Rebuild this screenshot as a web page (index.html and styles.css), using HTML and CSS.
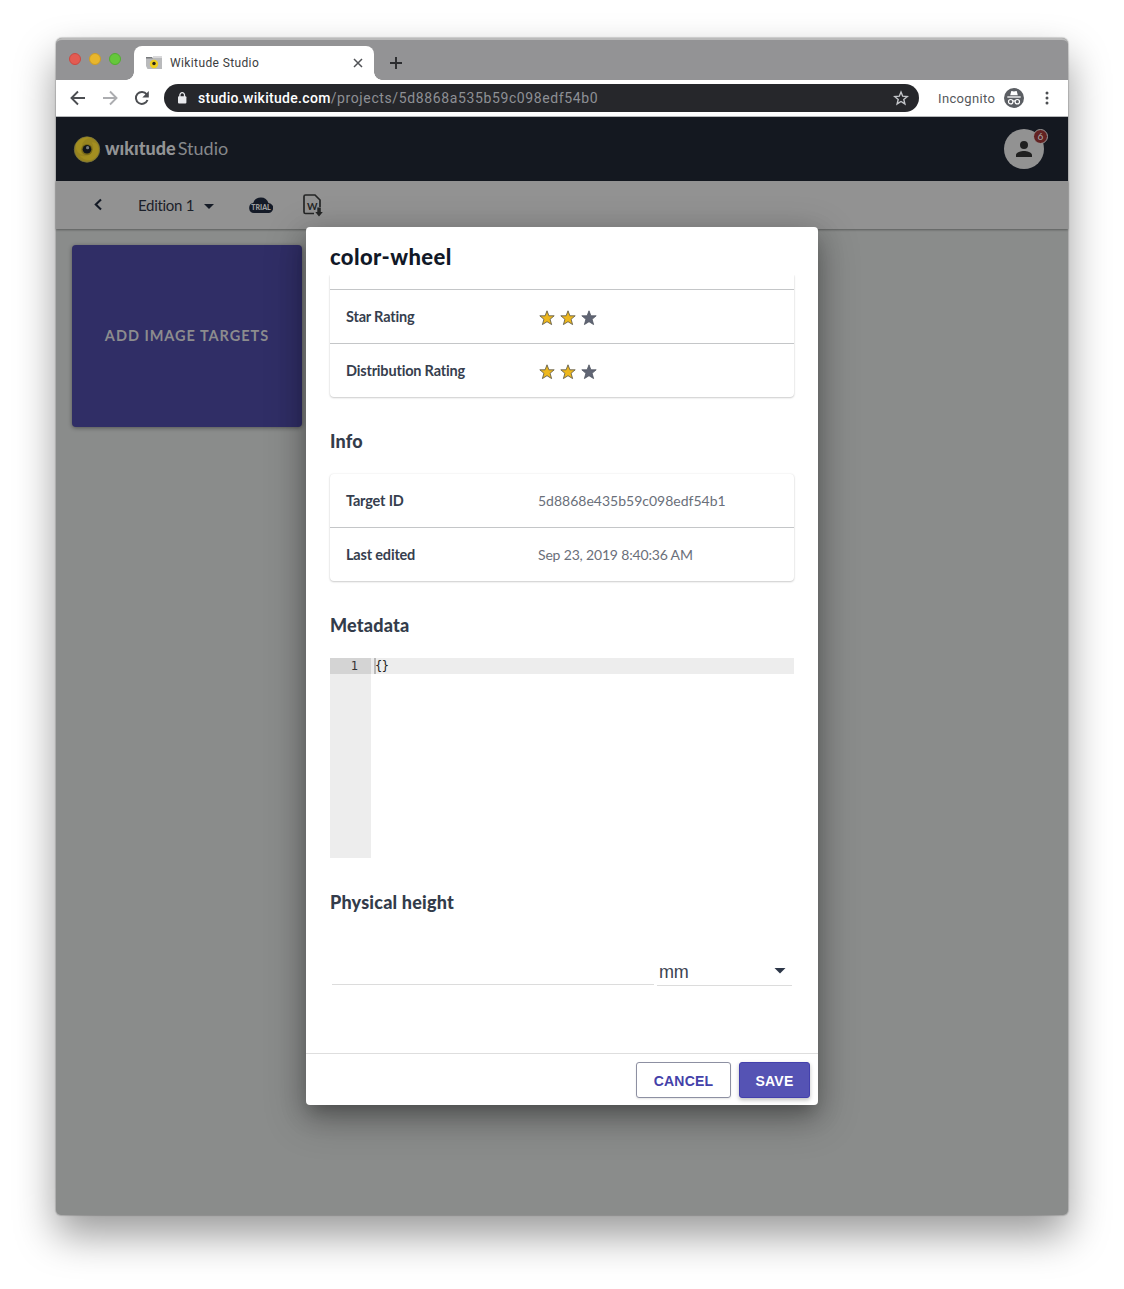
FILE: index.html
```html
<!DOCTYPE html>
<html lang="en">
<head>
<meta charset="utf-8">
<title>Wikitude Studio</title>
<link rel="stylesheet" href="styles.css">
</head>
<body>
<svg class="defs" width="0" height="0">
  <symbol id="star" viewBox="0 0 16 16"><path d="M8 .8 9.900 5.800h5.300l-4.100 3.500 1.500 5.300L8 11.700l-4.600 2.900 1.500-5.300L.8 5.800h5.300z"/></symbol>
</svg>
<div class="window">
  <header class="tabs">
    <div class="lights"><i class="light red"></i><i class="light amber"></i><i class="light green"></i></div>
    <div class="tab">
      <svg class="favicon" width="16" height="14" viewBox="0 0 16 14"><path d="M0 2h16v11H1.500L0 10z" fill="#b9babc"/><path d="M0 1h6l1 1.500H0z" fill="#77797c"/><path d="M7 0h9v2H7z" fill="#d8d8da"/><circle cx="8" cy="8" r="4.200" fill="#ecce22"/><circle cx="8" cy="7.500" r="1.700" fill="#25231b"/></svg>
      <span class="tab-title">Wikitude Studio</span>
      <svg width="10" height="10" viewBox="0 0 10 10"><path d="M1 1l8 8M9 1 1 9" stroke="#505256" stroke-width="1.500"/></svg>
    </div>
    <svg class="plus" width="12" height="12" viewBox="0 0 12 12"><path d="M6 0v12M0 6h12" stroke="#2b2c2f" stroke-width="1.900"/></svg>
  </header>
  <div class="toolbar">
    <svg width="16" height="16" viewBox="0 0 16 16" fill="none" stroke="#4c4e52" stroke-width="1.900"><path d="M15 8H2M8 1.500 1.500 8 8 14.500"/></svg>
    <svg width="16" height="16" viewBox="0 0 16 16" fill="none" stroke="#acadb0" stroke-width="1.900"><path d="M1 8h13M8 1.500 14.500 8 8 14.500"/></svg>
    <svg width="16" height="16" viewBox="0 0 16 16"><path d="M13.500 10a6 6 0 1 1-.8-5.700" fill="none" stroke="#4c4e52" stroke-width="2"/><path d="M14.800 1v6.500H8.300z" fill="#4c4e52"/></svg>
    <div class="omnibox">
      <svg width="10" height="12" viewBox="0 0 10 12"><rect x="1" y="4.300" width="8.400" height="7.200" rx="1" fill="#e9eaed"/><path d="M2.900 5V3a2.300 2.300 0 0 1 4.600 0v2" fill="none" stroke="#e9eaed" stroke-width="1.300"/></svg>
      <span class="url"><b>studio.wikitude.com</b><span class="path">/projects/5d8868a535b59c098edf54b0</span></span>
      <svg width="16" height="16" viewBox="0 0 16 16"><path d="m8 2 1.700 4.200 4.600.3-3.500 2.900 1.100 4.500L8 11.500l-3.900 2.400 1.100-4.500-3.500-2.900 4.600-.3z" fill="none" stroke="#c4c6ca" stroke-width="1.400"/></svg>
    </div>
    <span class="incognito">Incognito</span>
    <svg class="spy" width="20" height="20" viewBox="0 0 20 20"><circle cx="10" cy="10" r="10" fill="#5b5e63"/><path d="m6.200 7.300 1-4q.2-.5.700-.3l2.100.6 2.100-.6q.5-.2.700.3l1 4z" fill="#fff"/><path d="M3.300 9h13.400" stroke="#fff" stroke-width="1.300"/><g fill="none" stroke="#fff" stroke-width="1.200"><circle cx="6.700" cy="13.700" r="2.200"/><circle cx="13.300" cy="13.700" r="2.200"/><path d="M8.900 13.200q1.100-.7 2.200 0"/></g></svg>
    <svg class="more" width="4" height="14" viewBox="0 0 4 14" fill="#4c4e52"><circle cx="2" cy="2" r="1.500"/><circle cx="2" cy="7" r="1.500"/><circle cx="2" cy="12" r="1.500"/></svg>
  </div>
  <div class="app">
    <div class="appbar">
      <svg class="logo" width="28" height="28" viewBox="0 0 28 28"><circle cx="14" cy="14.500" r="12.700" fill="#97831f" stroke="#77723f" stroke-width=".8"/><path d="M3 9Q9 0 19 3q-9 0-10 8-3 5 1 9Q2 18 3 9zm21.500 1q4 9-5 14.500-8 2-13-4 10 3 13-5 2-5-1-8 4-1 6 2.500z" fill="#a38e20"/><circle cx="14" cy="14.500" r="5.500" fill="#776817"/><circle cx="14" cy="14.300" r="4.300" fill="#11151b"/><circle cx="14.600" cy="12.700" r="1.600" fill="#777b80"/></svg>
      <span class="brand">wıkıtude</span><span class="product">Studio</span>
      <div class="avatar">
        <svg width="24" height="24" viewBox="0 0 24 24" fill="#202020"><path d="M12 12a4 4 0 1 0 0-8 4 4 0 0 0 0 8zm0 2c-2.670 0-8 1.340-8 4v2h16v-2c0-2.660-5.330-4-8-4z"/></svg>
        <span class="badge">6</span>
      </div>
    </div>
    <div class="subbar">
      <svg class="chevron" width="10" height="14" viewBox="0 0 10 14"><path d="M9 1.500 3.800 6.500 9 11.500" fill="none" stroke="#141a26" stroke-width="2.100"/></svg>
      <span class="edition">Edition 1</span>
      <svg class="caret" width="10" height="5" viewBox="0 0 10 5"><path d="M0 0h10L5 5z" fill="#161c27"/></svg>
      <div class="trial">
        <svg width="24" height="16" viewBox="0 0 24 16"><path d="M5 16a5 5 0 0 1-.8-9.900A8 8 0 0 1 19.500 6 5 5 0 0 1 19 16z" fill="#141a27"/></svg>
        <span class="trial-text">TRIAL</span>
      </div>
      <div class="export">
        <svg width="20" height="23" viewBox="0 0 20 23"><path d="M11 19.500H2.500a1.500 1.500 0 0 1-1.500-1.500V2.500A1.500 1.500 0 0 1 2.500 1H12l5 5v7" fill="none" stroke="#252626" stroke-width="1.700"/><path d="M14.300 13.500h3.500v4.500h2L16 22.500 12.300 18h2z" fill="#252626"/></svg>
        <span class="export-letter">W</span>
      </div>
    </div>
    <main class="targets"><div class="add-card">ADD IMAGE TARGETS</div></main>
  </div>

  <section class="dialog">
    <h1>color-wheel</h1>
    <div class="dialog-body">
      <div class="panel ratings">
        <div class="row stub"></div>
        <div class="row"><span class="label">Star Rating</span><span class="stars"><svg><use href="#star"/></svg><svg><use href="#star"/></svg><svg class="off"><use href="#star"/></svg></span></div>
        <div class="row"><span class="label">Distribution Rating</span><span class="stars"><svg><use href="#star"/></svg><svg><use href="#star"/></svg><svg class="off"><use href="#star"/></svg></span></div>
      </div>
      <h2>Info</h2>
      <div class="panel">
        <div class="row"><span class="label">Target ID</span><span class="value id">5d8868e435b59c098edf54b1</span></div>
        <div class="row"><span class="label">Last edited</span><span class="value">Sep 23, 2019 8:40:36 AM</span></div>
      </div>
      <h2>Metadata</h2>
      <div class="editor">
        <div class="gutter"><div class="line-no">1</div></div>
        <div class="code"><div class="line">{}</div></div>
      </div>
      <h2>Physical height</h2>
      <div class="fields">
        <div class="input"></div>
        <div class="select"><span>mm</span><svg width="12" height="6" viewBox="0 0 12 6"><path d="M.5 0h11L6 5.500z" fill="#2d3748"/></svg></div>
      </div>
    </div>
    <footer class="actions"><button class="btn cancel">CANCEL</button><button class="btn save">SAVE</button></footer>
  </section>
</div>
</body>
</html>
```
FILE: styles.css
```css
* { box-sizing: border-box; }
body { margin: 0; width: 1124px; height: 1289px; padding: 38px 56px 0; background: #fff; overflow: hidden; font-family: Lato, sans-serif; }
svg { display: block; flex: none; }
.defs { position: absolute; }
.window { position: relative; width: 1012px; height: 1177px; border-radius: 6px 6px 5px 5px; background: #8a8c8b; display: flex; flex-direction: column; box-shadow: 0 0 1px 1px rgba(0,0,0,.17), 0 20px 40px rgba(0,0,0,.4); }
.tabs { height: 42px; background: #939395; border-top: 2px solid #bababa; border-radius: 6px 6px 0 0; display: flex; align-items: flex-end; flex: none; }
.lights { display: flex; gap: 8px; width: 78px; padding-left: 13px; align-self: center; margin-bottom: 3px; }
.light { width: 12px; height: 12px; border-radius: 50%; border: 1px solid; }
.red { background: #e35b52; border-color: #cb4942; }
.amber { background: #e8b62d; border-color: #cc9d27; }
.green { background: #65c73b; border-color: #52ad31; }
.tab { position: relative; height: 34px; width: 240px; border-radius: 8px 8px 0 0; background: #fff; display: flex; align-items: center; padding: 0 11px 0 12px; }
.tab::before, .tab::after { content: ""; position: absolute; bottom: 0; width: 8px; height: 8px; }
.tab::before { left: -8px; background: radial-gradient(circle at 0 0, transparent 7.500px, #fff 8px); }
.tab::after { right: -8px; background: radial-gradient(circle at 100% 0, transparent 7.500px, #fff 8px); }
.tab-title { font: 12px/16px Roboto, sans-serif; letter-spacing: .38px; color: #3c3d40; margin-left: 8px; flex: 1; }
.plus { margin: 0 0 11px 16px; }
.toolbar { height: 37px; background: #fff; border-bottom: 1px solid #b6b8ba; display: flex; align-items: center; gap: 16px; padding-left: 14px; flex: none; }
.omnibox { width: 755px; height: 28px; margin-left: -2px; border-radius: 14px; background: #26272b; display: flex; align-items: center; padding: 0 10px 0 13px; }
.url { flex: 1; margin-left: 11px; font: 14px/20px Roboto, sans-serif; color: #8e9095; white-space: nowrap; letter-spacing: .62px; }
.url b { font-weight: 500; color: #fff; letter-spacing: .3px; }
.incognito { font: 13px/18px Roboto, sans-serif; letter-spacing: .36px; color: #55575b; margin: 1px -7px 0 3px; width: 57px; white-space: nowrap; }
.more { margin-left: 5px; }
.app { flex: 1; display: flex; flex-direction: column; }
.appbar { height: 64px; background: #141820; display: flex; align-items: center; padding: 0 24px 0 17px; flex: none; }
.brand { font-size: 18px; line-height: 22px; font-weight: 900; color: #929395; margin: -2px 0 0 4px; }
.product { font-size: 18px; line-height: 22px; color: #86888b; margin: -2px 0 0 2px; }
.avatar { position: relative; margin-left: auto; width: 40px; height: 40px; border-radius: 50%; background: #929292; display: grid; place-items: center; }
.badge { position: absolute; left: 29px; top: 0; width: 15px; height: 15px; border: 1px solid #999; border-radius: 50%; background: #632222; color: #aaa; font-size: 10px; line-height: 13px; text-align: center; }
.subbar { height: 48px; background: #929292; box-shadow: 0 1px 2px rgba(0,0,0,.35); display: flex; align-items: center; padding-left: 36px; flex: none; position: relative; }
.edition { font-size: 15px; letter-spacing: -.3px; color: #1b202a; margin-left: 36px; width: 57px; white-space: nowrap; }
.caret { margin: 3px 0 0 9px; }
.trial { position: relative; margin-left: 35px; }
.trial-text { position: absolute; left: 0; top: 6px; width: 24px; text-align: center; font: 900 7px/9px Lato, sans-serif; color: #a0a0a0; }
.export { position: relative; margin-left: 30px; }
.export-letter { position: absolute; left: 4px; top: 7px; font: bold 10px/11px Lato, sans-serif; color: #252626; }
.targets { padding: 16px; }
.add-card { width: 230px; height: 182px; padding-bottom: 2px; border-radius: 4px; background: #302e66; box-shadow: 0 1px 4px rgba(0,0,0,.4); color: #8c8c8e; font-size: 14.500px; font-weight: 700; letter-spacing: .97px; white-space: nowrap; display: grid; place-items: center; }
.dialog { position: absolute; left: 250px; top: 189px; width: 512px; height: 878px; border-radius: 4px; background: #fff; display: flex; flex-direction: column; box-shadow: 0 11px 15px -7px rgba(0,0,0,.2), 0 12px 38px 3px rgba(0,0,0,.26), 0 9px 24px 4px rgba(0,0,0,.12); }
h1 { margin: 0; padding: 16px 24px 0; height: 48px; font-size: 22px; line-height: 28px; letter-spacing: .4px; font-weight: 900; color: #111827; flex: none; }
.dialog-body { height: 778px; padding: 0 24px; overflow: hidden; }
.panel { border-radius: 4px; box-shadow: 0 1px 2px rgba(0,0,0,.18), 0 0 2px rgba(0,0,0,.1); }
.ratings { border-radius: 0 0 4px 4px; }
.row { height: 54px; display: flex; align-items: center; padding: 0 16px; border-bottom: 1px solid #c4c6c8; }
.row:last-child { border-bottom: 0; height: 53px; }
.row.stub { height: 15px; }
.label { width: 192px; font-size: 14.500px; line-height: 18px; letter-spacing: -.18px; font-weight: 700; color: #363e4e; }
.value { font-size: 14px; letter-spacing: -.17px; color: #6a6f7a; }
.value.id { letter-spacing: 0; }
.stars { display: flex; gap: 3px; margin-top: 2px; }
.stars svg { width: 18px; height: 16px; fill: #edb71d; stroke: #555244; stroke-width: .8; overflow: visible; }
.stars .off { fill: #606574; stroke: #505561; }
h2 { margin: 32px 0 21px; font-size: 18px; line-height: 24px; letter-spacing: .2px; font-weight: 900; color: #333c4b; }
.editor { height: 200px; display: flex; font: 12px/16px "DejaVu Sans Mono", monospace; color: #333; }
.gutter { width: 41px; background: #ededed; }
.line-no { height: 16px; padding-right: 13px; text-align: right; background: #d4d4d4; }
.code { flex: 1; }
.line { height: 16px; background: #ededed; padding-left: 2px; color: #222; display: flex; letter-spacing: -.5px; }
.line::before { content: ""; width: 2px; height: 16px; margin: 0 -1px 0 1px; background: #b9b9b9; }
.fields { display: flex; align-items: flex-start; gap: 3px; padding: 0 2px; margin-top: 39px; }
.input { width: 322px; height: 32px; border-bottom: 1px solid #dcdcdc; }
.select { width: 135px; height: 33px; border-bottom: 1px solid #dcdcdc; display: flex; justify-content: space-between; align-items: center; padding: 5px 6px 0 2px; font: 18px/24px "Liberation Sans", sans-serif; letter-spacing: -.3px; color: #3c4452; }
.select svg { margin-top: -2px; }
.actions { height: 52px; border-top: 1px solid #dedede; padding: 8px; display: flex; justify-content: flex-end; gap: 8px; }
.btn { height: 36px; padding: 2px 0 0; border-radius: 3px; font: bold 14px/20px "Liberation Sans", sans-serif; letter-spacing: .2px; }
.cancel { width: 95px; color: #4441a9; background: #fff; border: 1px solid #8d90a2; box-shadow: 0 1px 2px rgba(0,0,0,.1); }
.save { width: 71px; color: #fff; background: #5553b4; border: 1px solid #4340ad; box-shadow: 0 2px 4px rgba(0,0,0,.25); }
```
